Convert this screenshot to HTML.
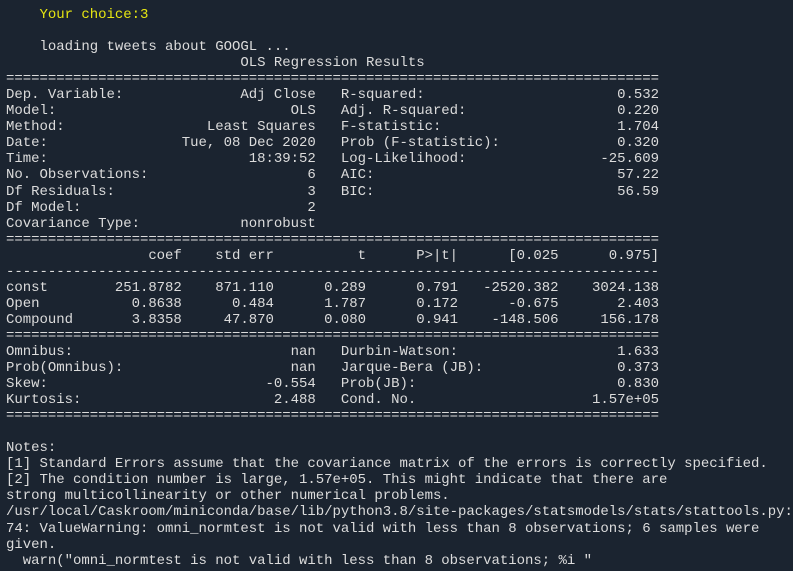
<!DOCTYPE html>
<html><head><meta charset="utf-8"><style>
html,body{margin:0;padding:0;background:#1b2430;width:793px;height:571px;overflow:hidden}
pre{margin:0;position:absolute;left:6px;top:7px;font-family:"Liberation Mono","Cousine","Courier New",monospace;font-size:14px;line-height:16.05px;color:#dcdcdc;white-space:pre;letter-spacing:-0.03px}
.y{color:#e6e612}
</style></head><body><pre>    <span class="y">Your choice:3</span>

    loading tweets about GOOGL ...
                            OLS Regression Results                            
==============================================================================
Dep. Variable:              Adj Close   R-squared:                       0.532
Model:                            OLS   Adj. R-squared:                  0.220
Method:                 Least Squares   F-statistic:                     1.704
Date:                Tue, 08 Dec 2020   Prob (F-statistic):              0.320
Time:                        18:39:52   Log-Likelihood:                -25.609
No. Observations:                   6   AIC:                             57.22
Df Residuals:                       3   BIC:                             56.59
Df Model:                           2                                         
Covariance Type:            nonrobust                                         
==============================================================================
                 coef    std err          t      P&gt;|t|      [0.025      0.975]
------------------------------------------------------------------------------
const        251.8782    871.110      0.289      0.791   -2520.382    3024.138
Open           0.8638      0.484      1.787      0.172      -0.675       2.403
Compound       3.8358     47.870      0.080      0.941    -148.506     156.178
==============================================================================
Omnibus:                          nan   Durbin-Watson:                   1.633
Prob(Omnibus):                    nan   Jarque-Bera (JB):                0.373
Skew:                          -0.554   Prob(JB):                        0.830
Kurtosis:                       2.488   Cond. No.                     1.57e+05
==============================================================================

Notes:
[1] Standard Errors assume that the covariance matrix of the errors is correctly specified.
[2] The condition number is large, 1.57e+05. This might indicate that there are
strong multicollinearity or other numerical problems.
/usr/local/Caskroom/miniconda/base/lib/python3.8/site-packages/statsmodels/stats/stattools.py:
74: ValueWarning: omni_normtest is not valid with less than 8 observations; 6 samples were
given.
  warn("omni_normtest is not valid with less than 8 observations; %i "</pre></body></html>
